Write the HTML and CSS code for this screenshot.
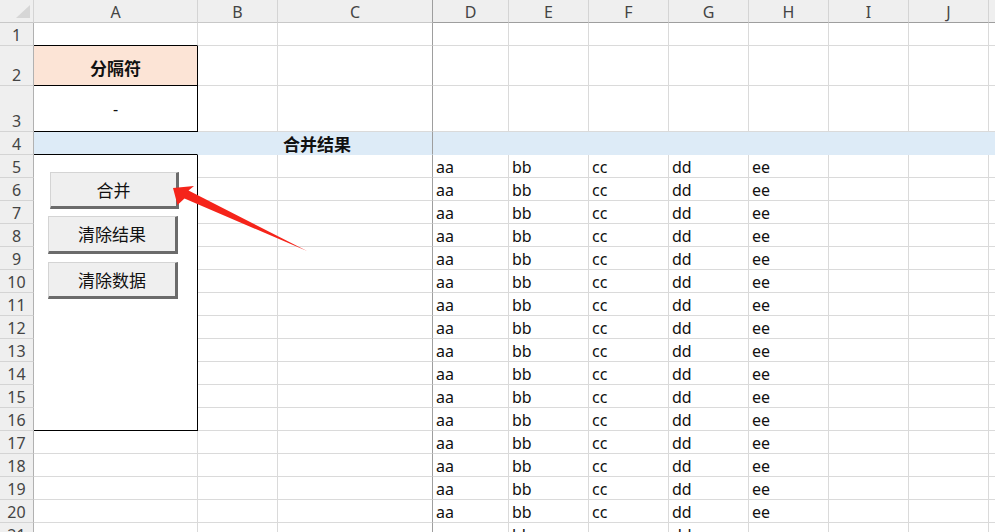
FILE: index.html
```html
<!DOCTYPE html>
<html lang="zh-CN">
<head>
<meta charset="utf-8">
<title>合并</title>
<link rel="stylesheet" href="styles.css">
</head>
<body>
<div class="sheet">
  <div class="c corner"><svg width="14" height="13" viewBox="0 0 14 13"><polygon points="14,0 14,13 0,13" fill="#d6d6d6"/></svg></div>
  <div class="c ch">A</div><div class="c ch">B</div><div class="c ch fz">C</div>
  <div class="c ch dk">D</div><div class="c ch dk">E</div><div class="c ch dk">F</div><div class="c ch dk">G</div><div class="c ch dk">H</div><div class="c ch dk">I</div><div class="c ch dk">J</div><div class="c ch dk"></div>

  <div class="c rh">1</div><div class="c bb"></div><div class="c"></div><div class="c fz"></div>
  <div class="c"></div><div class="c"></div><div class="c"></div><div class="c"></div><div class="c"></div><div class="c"></div><div class="c"></div><div class="c"></div>

  <div class="c rh">2</div><div class="c sep bb br">分隔符</div><div class="c"></div><div class="c fz"></div>
  <div class="c"></div><div class="c"></div><div class="c"></div><div class="c"></div><div class="c"></div><div class="c"></div><div class="c"></div><div class="c"></div>

  <div class="c rh">3</div><div class="c dash bb br">-</div><div class="c"></div><div class="c fz"></div>
  <div class="c"></div><div class="c"></div><div class="c"></div><div class="c"></div><div class="c"></div><div class="c"></div><div class="c"></div><div class="c"></div>

  <div class="c rh">4</div><div class="c band bb"></div><div class="c band"></div><div class="c band fz title">合并结果</div><div class="c band span8"></div>

  <div class="c rh">5</div><div class="c boxA bb br"></div><div class="c"></div><div class="c fz"></div>
  <div class="c">aa</div><div class="c">bb</div><div class="c">cc</div><div class="c">dd</div><div class="c">ee</div><div class="c"></div><div class="c"></div><div class="c"></div>

  <div class="c rh">6</div><div class="c"></div><div class="c fz"></div>
  <div class="c">aa</div><div class="c">bb</div><div class="c">cc</div><div class="c">dd</div><div class="c">ee</div><div class="c"></div><div class="c"></div><div class="c"></div>

  <div class="c rh">7</div><div class="c"></div><div class="c fz"></div>
  <div class="c">aa</div><div class="c">bb</div><div class="c">cc</div><div class="c">dd</div><div class="c">ee</div><div class="c"></div><div class="c"></div><div class="c"></div>

  <div class="c rh">8</div><div class="c"></div><div class="c fz"></div>
  <div class="c">aa</div><div class="c">bb</div><div class="c">cc</div><div class="c">dd</div><div class="c">ee</div><div class="c"></div><div class="c"></div><div class="c"></div>

  <div class="c rh">9</div><div class="c"></div><div class="c fz"></div>
  <div class="c">aa</div><div class="c">bb</div><div class="c">cc</div><div class="c">dd</div><div class="c">ee</div><div class="c"></div><div class="c"></div><div class="c"></div>

  <div class="c rh">10</div><div class="c"></div><div class="c fz"></div>
  <div class="c">aa</div><div class="c">bb</div><div class="c">cc</div><div class="c">dd</div><div class="c">ee</div><div class="c"></div><div class="c"></div><div class="c"></div>

  <div class="c rh">11</div><div class="c"></div><div class="c fz"></div>
  <div class="c">aa</div><div class="c">bb</div><div class="c">cc</div><div class="c">dd</div><div class="c">ee</div><div class="c"></div><div class="c"></div><div class="c"></div>

  <div class="c rh">12</div><div class="c"></div><div class="c fz"></div>
  <div class="c">aa</div><div class="c">bb</div><div class="c">cc</div><div class="c">dd</div><div class="c">ee</div><div class="c"></div><div class="c"></div><div class="c"></div>

  <div class="c rh">13</div><div class="c"></div><div class="c fz"></div>
  <div class="c">aa</div><div class="c">bb</div><div class="c">cc</div><div class="c">dd</div><div class="c">ee</div><div class="c"></div><div class="c"></div><div class="c"></div>

  <div class="c rh">14</div><div class="c"></div><div class="c fz"></div>
  <div class="c">aa</div><div class="c">bb</div><div class="c">cc</div><div class="c">dd</div><div class="c">ee</div><div class="c"></div><div class="c"></div><div class="c"></div>

  <div class="c rh">15</div><div class="c"></div><div class="c fz"></div>
  <div class="c">aa</div><div class="c">bb</div><div class="c">cc</div><div class="c">dd</div><div class="c">ee</div><div class="c"></div><div class="c"></div><div class="c"></div>

  <div class="c rh">16</div><div class="c"></div><div class="c fz"></div>
  <div class="c">aa</div><div class="c">bb</div><div class="c">cc</div><div class="c">dd</div><div class="c">ee</div><div class="c"></div><div class="c"></div><div class="c"></div>

  <div class="c rh">17</div><div class="c"></div><div class="c"></div><div class="c fz"></div>
  <div class="c">aa</div><div class="c">bb</div><div class="c">cc</div><div class="c">dd</div><div class="c">ee</div><div class="c"></div><div class="c"></div><div class="c"></div>

  <div class="c rh">18</div><div class="c"></div><div class="c"></div><div class="c fz"></div>
  <div class="c">aa</div><div class="c">bb</div><div class="c">cc</div><div class="c">dd</div><div class="c">ee</div><div class="c"></div><div class="c"></div><div class="c"></div>

  <div class="c rh">19</div><div class="c"></div><div class="c"></div><div class="c fz"></div>
  <div class="c">aa</div><div class="c">bb</div><div class="c">cc</div><div class="c">dd</div><div class="c">ee</div><div class="c"></div><div class="c"></div><div class="c"></div>

  <div class="c rh">20</div><div class="c"></div><div class="c"></div><div class="c fz"></div>
  <div class="c">aa</div><div class="c">bb</div><div class="c">cc</div><div class="c">dd</div><div class="c">ee</div><div class="c"></div><div class="c"></div><div class="c"></div>

  <div class="c rh">21</div><div class="c"></div><div class="c"></div><div class="c fz"></div>
  <div class="c">aa</div><div class="c">bb</div><div class="c">cc</div><div class="c">dd</div><div class="c">ee</div><div class="c"></div><div class="c"></div><div class="c"></div>

  <div class="btn b1">合并</div>
  <div class="btn b2">清除结果</div>
  <div class="btn b3">清除数据</div>

  <svg class="arrow" width="995" height="532" viewBox="0 0 995 532">
    <polygon points="173,188 194,186 188.5,190.5 307,251 184.5,198.5 177.5,205" fill="#f5241a"/>
  </svg>
</div>
</body>
</html>
```

FILE: styles.css
```css
html, body {
  margin: 0;
  height: 100%;
  overflow: hidden;
  background: #ffffff;
}

.sheet {
  position: relative;
  width: 995px;
  height: 532px;
  overflow: hidden;
  display: grid;
  grid-template-columns: 34px 164px 80px 155px 76px repeat(6, 80px) 7px;
  grid-template-rows: 23px 23px 40px 46px 23px repeat(17, 23px);
  font-family: "Noto Sans", "Noto Sans CJK SC", sans-serif;
  font-size: 16px;
  line-height: 20px;
  color: #111;
}

.c {
  box-sizing: border-box;
  min-width: 0;
  display: flex;
  align-items: flex-end;
  padding: 0 3px;
  white-space: nowrap;
  border-right: 1px solid #dadada;
  border-bottom: 1px solid #dadada;
}

.corner {
  background: #efefef;
  justify-content: flex-end;
  padding: 0 3px 4px 0;
  border-right-color: #d4d4d4;
  border-bottom-color: #c8c8c8;
}

.ch {
  background: #efefef;
  justify-content: center;
  color: #444;
  border-right-color: #d4d4d4;
  border-bottom-color: #c8c8c8;
}

.ch.dk {
  border-bottom-color: #9e9e9e;
}

.rh {
  background: #efefef;
  justify-content: center;
  color: #444;
  border-right-color: #b1b1b1;
  border-bottom-color: #d4d4d4;
}

.fz {
  border-right-color: #9e9e9e;
}

.ch.fz {
  border-right-color: #9e9e9e;
}

.bb {
  border-bottom-color: #000;
}

.br {
  border-right-color: #000;
}

.sep {
  background: #fce4d6;
  justify-content: center;
  font-family: "Noto Sans CJK SC", sans-serif;
  font-weight: 700;
  font-size: 17px;
  padding-bottom: 7px;
}

.dash {
  justify-content: center;
  align-items: center;
}

.band {
  background: #ddebf7;
  border-right-color: #ddebf7;
  border-bottom-color: #ddebf7;
}

.band.bb {
  border-bottom-color: #000;
}

.band.fz {
  border-right-color: #9e9e9e;
}

.title {
  font-family: "Noto Sans CJK SC", sans-serif;
  font-weight: 700;
  font-size: 17px;
  padding-left: 5px;
}

.span8 {
  grid-column: span 8;
}

.boxA {
  grid-column: 2;
  grid-row: 6 / span 12;
}

.btn {
  position: absolute;
  box-sizing: border-box;
  display: flex;
  align-items: center;
  justify-content: center;
  background: #efefef;
  border-top: 1px solid #d4d4d4;
  border-left: 1px solid #d4d4d4;
  border-right: 3px solid #6b6b6b;
  border-bottom: 3px solid #6b6b6b;
  font-family: "Noto Sans CJK SC", sans-serif;
  font-size: 17px;
  line-height: 20px;
  color: #111;
}

.b1 {
  left: 50px;
  top: 172px;
  width: 129px;
  height: 37px;
}

.b2 {
  left: 48px;
  top: 216px;
  width: 130px;
  height: 38px;
}

.b3 {
  left: 48px;
  top: 262px;
  width: 130px;
  height: 37px;
}

.arrow {
  position: absolute;
  left: 0;
  top: 0;
  pointer-events: none;
}
```
